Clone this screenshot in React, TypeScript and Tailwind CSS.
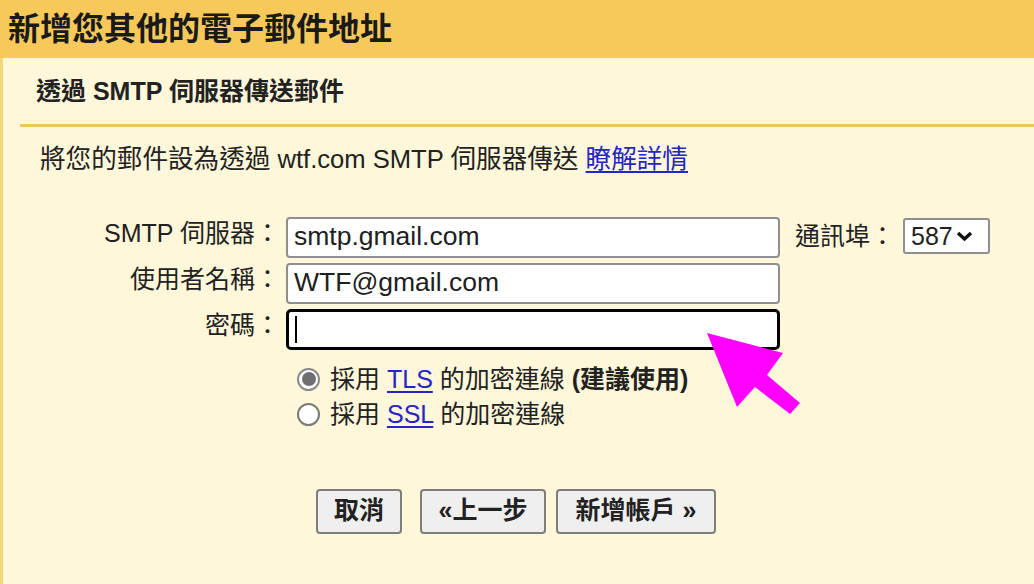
import React from "react";

const font = "font-['Liberation_Sans','Noto_Sans_CJK_TC',sans-serif]";

function TextBox({ value, focused }: { value?: string; focused?: boolean }) {
  return (
    <div
      className={
        focused
          ? "w-[494px] h-[41px] bg-white border-[3px] border-black rounded-[5px] flex items-center pl-[6px]"
          : "w-[494px] h-[41px] bg-white border-2 border-[#8f8f8f] rounded-[4px] flex items-center pl-[6px]"
      }
    >
      {focused ? <div className="w-[2px] h-[27px] bg-black" /> : <span className="text-[26.5px] text-[#202020]">{value}</span>}
    </div>
  );
}

function Radio({ checked }: { checked?: boolean }) {
  return (
    <div
      className={
        checked
          ? "w-[23px] h-[23px] rounded-full border-2 border-[#8a8a8a] bg-white flex items-center justify-center"
          : "w-[23px] h-[23px] rounded-full border-2 border-[#7a7a7a] bg-white"
      }
    >
      {checked && <div className="w-[14px] h-[14px] rounded-full bg-[#6f6f6f]" />}
    </div>
  );
}

function Btn({ children, w }: { children: React.ReactNode; w: string }) {
  return (
    <div className={`${w} h-[45px] bg-[#efefef] border-2 border-[#7d7d7d] rounded-[4px] flex items-center justify-center text-[25px] font-bold text-[#222]`}>
      {children}
    </div>
  );
}

export default function App() {
  return (
    <div className={`relative w-[1034px] h-[584px] overflow-hidden bg-[#fff7d9] text-[#222] ${font}`}>
      <div className="h-[58px] bg-[#f7c95b] flex items-center pl-[8px]">
        <h1 className="text-[32px] font-bold text-[#1a1a1a] leading-none">新增您其他的電子郵件地址</h1>
      </div>

      <div className="flex h-[526px]">
        <div className="w-[3px] bg-[#f3d877]" />
        <div className="flex-1">
          <div className="h-[66px] flex items-center pl-[33px]">
            <h2 className="text-[25px] font-bold leading-none">透過 SMTP 伺服器傳送郵件</h2>
          </div>
          <div className="ml-[17px] h-[3px] bg-[#f0c75c]" />

          <div className="pl-[37px] pt-[20px] text-[25.6px] leading-none">
            將您的郵件設為透過 wtf.com SMTP 伺服器傳送{" "}
            <a className="text-[#2525c8] underline underline-offset-[3px]">瞭解詳情</a>
          </div>

          <div className="pl-[37px] pt-[44px] flex flex-col gap-[5px] text-[25px]">
            <div className="flex items-center">
              <div className="w-[240px] text-right leading-none -mt-[8px]">SMTP 伺服器：</div>
              <div className="ml-[6px]">
                <TextBox value="smtp.gmail.com" />
              </div>
              <div className="ml-[15px] leading-none -mt-[2px]">通訊埠：</div>
              <div className="ml-[8px] w-[87px] h-[36px] bg-white border-2 border-[#8f8f8f] rounded-[3px] flex items-center gap-[3px] pl-[6px] -mt-[2px]">
                <span className="leading-none">587</span>
                <svg width="17" height="12" viewBox="0 0 17 12">
                  <path d="M2 3 L8.5 9 L15 3" fill="none" stroke="#111" strokeWidth="3.4" />
                </svg>
              </div>
            </div>
            <div className="flex items-center">
              <div className="w-[240px] text-right leading-none -mt-[8px]">使用者名稱：</div>
              <div className="ml-[6px]">
                <TextBox value="WTF@gmail.com" />
              </div>
            </div>
            <div className="flex items-center">
              <div className="w-[240px] text-right leading-none -mt-[8px]">密碼：</div>
              <div className="ml-[6px]">
                <TextBox focused />
              </div>
            </div>
          </div>

          <div className="pl-[294px] pt-[17px] flex flex-col gap-[10px] text-[25px] leading-none">
            <div className="flex items-center gap-[10px]">
              <Radio checked />
              <span>
                採用 <a className="text-[#2525c8] underline underline-offset-[3px]">TLS</a> 的加密連線 <b>(建議使用)</b>
              </span>
            </div>
            <div className="flex items-center gap-[10px]">
              <Radio />
              <span>
                採用 <a className="text-[#2525c8] underline underline-offset-[3px]">SSL</a> 的加密連線
              </span>
            </div>
          </div>

          <div className="pl-[313px] pt-[62px] flex">
            <Btn w="w-[86px]">取消</Btn>
            <div className="ml-[18px]">
              <Btn w="w-[126px]">«上一步</Btn>
            </div>
            <div className="ml-[10px]">
              <Btn w="w-[160px]">新增帳戶 »</Btn>
            </div>
          </div>
        </div>
      </div>

      <svg className="absolute left-0 top-0 pointer-events-none" width="1034" height="584">
        <polygon points="707,333 783,353 767,375 800,403 790,414 755,387 737,407" fill="#ff00ff" />
      </svg>
    </div>
  );
}
